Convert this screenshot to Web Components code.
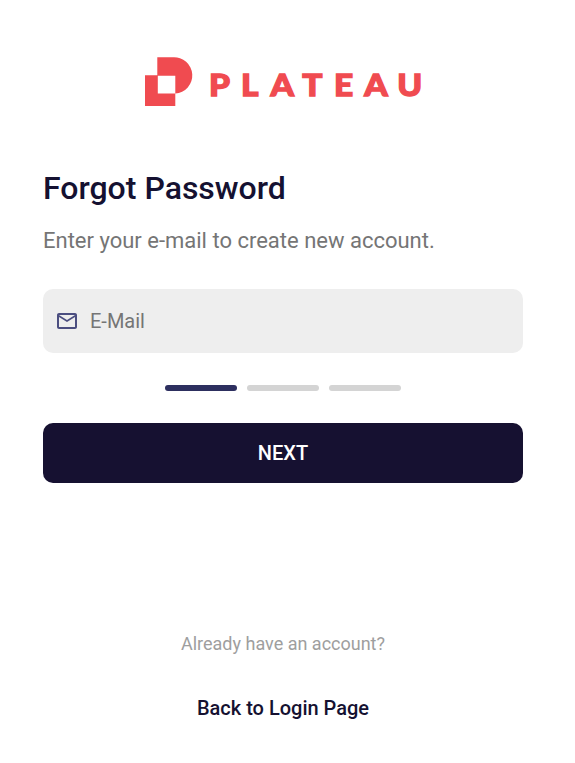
<!DOCTYPE html>
<html lang="en"><head><meta charset="utf-8"><title>Forgot Password</title>
<style>html,body{margin:0;background:#fff}body{font-family:Roboto,"Liberation Sans",sans-serif;color:#151131}</style></head>
<body>
<forgot-page>
  <brand-logo slot="brand"></brand-logo>
  <page-heading>Forgot Password<span slot="sub">Enter your e-mail to create new account.</span></page-heading>
  <mail-field>E-Mail</mail-field>
  <step-bars></step-bars>
  <primary-button>NEXT</primary-button>
  <login-footer slot="footer">Already have an account?<span slot="link">Back to Login Page</span></login-footer>
</forgot-page>
<script>
const define = (name, html) => customElements.define(name, class extends HTMLElement {
  constructor() { super(); this.attachShadow({mode: 'open'}).innerHTML = html; }
});
define('forgot-page', `<style>
:host{display:flex;flex-direction:column;box-sizing:border-box;width:566px;height:763px;padding:50px 43px 43px}
main{display:flex;flex-direction:column;margin-top:50px}
footer{margin-top:auto}
</style><slot name="brand"></slot><main><slot></slot></main><footer><slot name="footer"></slot></footer>`);
define('brand-logo', `<style>
:host{display:block;height:64px}svg{display:block;margin:0 auto}
text{font-family:Lato,sans-serif;font-weight:900;font-size:31px;text-anchor:middle;stroke:#f04b50;stroke-width:1.3px}
</style><svg width="290" height="64" viewBox="138 50 290 64" fill="#f04b50">
<path d="M157.3 57.3H173a18.1 18.1 0 0 1 2.3 36.2V106H145V75.3h12.3zM157.8 75.8v17.7h17.5V75.8z" fill-rule="evenodd"/>
<text transform="scale(1.08 1)" y="95.8" x="203.2 231.2 261.4 289.2 318.2 348.2 379.4">PLATEAU</text></svg>`);
define('page-heading', `<style>
:host{display:block;font-weight:500;font-size:32px;line-height:48px}
p{margin:9px 0 0;font-weight:400;font-size:22px;line-height:40px;color:#757575}
</style><slot></slot><p><slot name="sub"></slot></p>`);
define('mail-field', `<style>
:host{display:flex;align-items:center;gap:11px;box-sizing:border-box;height:64px;margin-top:28px;padding:0 12px;border-radius:10px;background:#eee;color:#757575;font-size:20px}
</style><svg width="24" height="24" viewBox="0 0 24 24" fill="#4b4e80"><path d="M22 6c0-1.1-.9-2-2-2H4c-1.1 0-2 .9-2 2v12c0 1.1.9 2 2 2h16c1.1 0 2-.9 2-2V6zm-2 0l-8 5-8-5h16zm0 12H4V8l8 5 8-5v10z"/></svg><slot></slot>`);
define('step-bars', `<style>
:host{display:flex;justify-content:center;gap:10px;margin:32px 0}
i{width:72px;height:6px;border-radius:3px;background:#d4d4d4}i:first-of-type{background:#2d2f5f}
</style><i></i><i></i><i></i>`);
define('primary-button', `<style>
:host{display:flex;align-items:center;justify-content:center;height:60px;border-radius:10px;background:#161131;color:#fff;font-size:20px;font-weight:500}
</style><slot></slot>`);
define('login-footer', `<style>
:host{display:block;text-align:center;font-size:18px;line-height:24px;color:#9e9e9e}
p{margin:40px 0 0;font-size:20px;line-height:24px;font-weight:500;color:#151131}
</style><slot></slot><p><slot name="link"></slot></p>`);
</script></body></html>
